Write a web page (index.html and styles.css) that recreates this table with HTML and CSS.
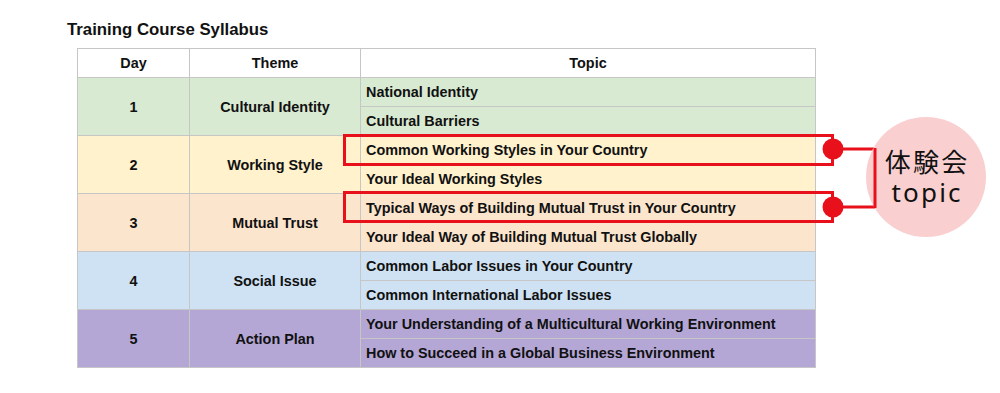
FILE: index.html
```html
<!DOCTYPE html>
<html>
<head>
<meta charset="utf-8">
<link rel="stylesheet" href="styles.css">
</head>
<body>
<div class="page">
  <h1 class="title">Training Course Syllabus</h1>
  <table class="syllabus">
    <colgroup><col class="c-day"><col class="c-theme"><col class="c-topic"></colgroup>
    <thead>
      <tr class="head"><th>Day</th><th>Theme</th><th>Topic</th></tr>
    </thead>
    <tbody>
      <tr class="green"><td rowspan="2" class="ctr">1</td><td rowspan="2" class="ctr">Cultural Identity</td><td class="topic">National Identity</td></tr>
      <tr class="green"><td class="topic">Cultural Barriers</td></tr>
      <tr class="yellow"><td rowspan="2" class="ctr">2</td><td rowspan="2" class="ctr">Working Style</td><td class="topic">Common Working Styles in Your Country</td></tr>
      <tr class="yellow"><td class="topic">Your Ideal Working Styles</td></tr>
      <tr class="orange"><td rowspan="2" class="ctr">3</td><td rowspan="2" class="ctr">Mutual Trust</td><td class="topic">Typical Ways of Building Mutual Trust in Your Country</td></tr>
      <tr class="orange"><td class="topic">Your Ideal Way of Building Mutual Trust Globally</td></tr>
      <tr class="blue"><td rowspan="2" class="ctr">4</td><td rowspan="2" class="ctr">Social Issue</td><td class="topic">Common Labor Issues in Your Country</td></tr>
      <tr class="blue"><td class="topic">Common International Labor Issues</td></tr>
      <tr class="purple"><td rowspan="2" class="ctr">5</td><td rowspan="2" class="ctr">Action Plan</td><td class="topic">Your Understanding of a Multicultural Working Environment</td></tr>
      <tr class="purple"><td class="topic">How to Succeed in a Global Business Environment</td></tr>
    </tbody>
  </table>

  <svg class="callout-lines" width="1000" height="393" viewBox="0 0 1000 393">
    <g fill="none" stroke="#e8101a" stroke-width="3">
      <rect x="344.5" y="135.5" width="488" height="29"/>
      <rect x="344.5" y="192.5" width="488" height="29"/>
      <polyline points="834,149 875,149 875,207 834,207"/>
    </g>
    <g fill="#e8101a">
      <circle cx="833" cy="149" r="10.5"/>
      <circle cx="833" cy="207" r="10.5"/>
    </g>
  </svg>
  <div class="bubble"><p class="bubble-text">体験会<br>topic</p></div>
  <svg class="callout-front" width="1000" height="393" viewBox="0 0 1000 393">
    <line x1="875" y1="148" x2="875" y2="208" stroke="#e8101a" stroke-width="3"/>
  </svg>
</div>
</body>
</html>
```
FILE: styles.css
```css
html, body {
  margin: 0;
  padding: 0;
  background: #ffffff;
}
.page {
  position: relative;
  width: 1000px;
  height: 393px;
  overflow: hidden;
  padding: 20px 0 0 77px;
  box-sizing: border-box;
  font-family: "Liberation Sans", Arial, sans-serif;
  color: #111;
}
.title {
  margin: 0 0 8px -10px;
  font-size: 16.8px;
  line-height: 20px;
  font-weight: bold;
  color: #111;
}
.syllabus {
  border-collapse: collapse;
  table-layout: fixed;
  width: 738px;
  font-size: 14.4px;
  font-weight: bold;
}
.c-day { width: 112px; }
.c-theme { width: 171px; }
.c-topic { width: 455px; }
.syllabus th, .syllabus td {
  border: 1px solid #c6c6c6;
  padding: 0 5px;
  line-height: 16px;
}
.syllabus th {
  height: 28px;
  text-align: center;
  background: #ffffff;
}
.syllabus td { height: 28px; }
.syllabus .ctr { text-align: center; }
.syllabus .topic { text-align: left; }
.green td { background: #d9ead3; }
.yellow td { background: #fff2cc; }
.orange td { background: #fce5cd; }
.blue td { background: #cfe2f3; }
.purple td { background: #b4a7d6; }
.callout-lines, .callout-front {
  position: absolute;
  left: 0;
  top: 0;
  pointer-events: none;
}
.bubble {
  position: absolute;
  left: 866px;
  top: 117px;
  width: 120px;
  height: 120px;
  border-radius: 50%;
  background: #f9cfd0;
  display: flex;
  align-items: center;
  justify-content: center;
  color: #111;
  padding-bottom: 1px;
  box-sizing: border-box;
}
.bubble-text {
  margin: 0 -2.2px 0 0;
  text-align: center;
  font-family: "Noto Sans", "Noto Sans CJK JP", sans-serif;
  font-size: 26px;
  line-height: 30px;
  letter-spacing: 2.2px;
}
```
